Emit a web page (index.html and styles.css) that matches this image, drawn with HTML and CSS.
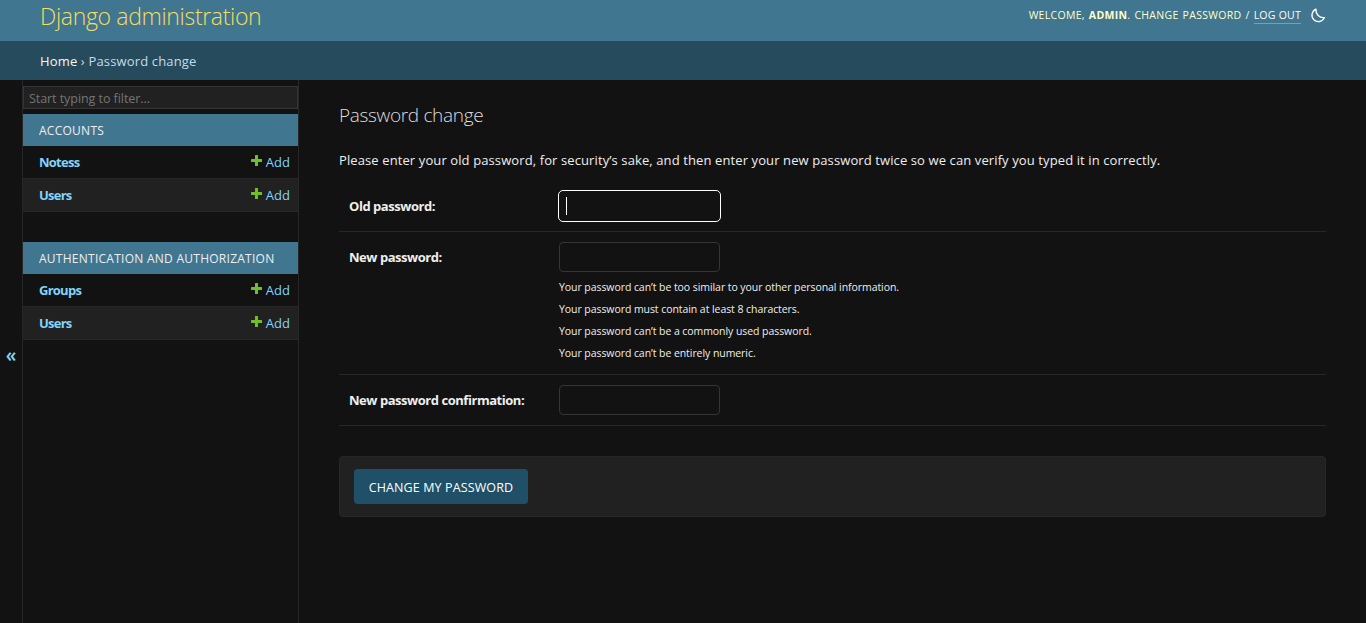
FILE: index.html
```html
<!DOCTYPE html>
<html lang="en">
<head>
<meta charset="utf-8">
<title>Password change | Django site admin</title>
<link rel="stylesheet" href="styles.css">
</head>
<body>
<svg class="sprite" aria-hidden="true">
  <symbol id="plus" viewBox="0 0 11 11"><path d="M4 .5q0-.5.5-.5h2q.5 0 .5.5V4h3.500q.5 0 .5.5v2q0 .5-.5.5H7v3.500q0 .5-.5.5h-2q-.5 0-.5-.5V7H.5q-.5 0-.5-.5v-2q0-.5.5-.5H4z"/></symbol>
</svg>
<header class="header">
  <h1 class="site-name"><span>Django administration</span></h1>
  <div class="user-tools">
    <span class="tools-text">Welcome, <strong>admin</strong>. <span>Change password</span> / </span><a class="logout">Log out</a>
    <svg class="moon" viewBox="0 0 16 16"><path d="M6 2.200A6.450 6.450 0 1 0 14.400 10.600A7.500 7.500 0 0 1 6 2.200Z"/></svg>
  </div>
</header>
<nav class="breadcrumbs"><span><a>Home</a> › Password change</span></nav>
<div class="main">
  <div class="toggle"><span>«</span></div>
  <aside class="sidebar">
    <input class="filter" type="text" placeholder="Start typing to filter...">
    <section class="module">
      <h2 class="caption"><span>Accounts</span></h2>
      <div class="row"><strong>Notess</strong><a class="add"><svg><use href="#plus"/></svg>Add</a></div>
      <div class="row alt"><strong>Users</strong><a class="add"><svg><use href="#plus"/></svg>Add</a></div>
    </section>
    <section class="module">
      <h2 class="caption"><span>Authentication and Authorization</span></h2>
      <div class="row"><strong>Groups</strong><a class="add"><svg><use href="#plus"/></svg>Add</a></div>
      <div class="row alt"><strong>Users</strong><a class="add"><svg><use href="#plus"/></svg>Add</a></div>
    </section>
  </aside>
  <main class="content">
    <h1 class="title"><span>Password change</span></h1>
    <p class="intro"><span>Please enter your old password, for security’s sake, and then enter your new password twice so we can verify you typed it in correctly.</span></p>
    <form>
      <div class="form-row">
        <label>Old password:</label>
        <div class="field focused"><i class="caret"></i></div>
      </div>
      <div class="form-row">
        <label>New password:</label>
        <div>
          <div class="field"></div>
          <ul class="help">
            <li><span>Your password can’t be too similar to your other personal information.</span></li>
            <li><span>Your password must contain at least 8 characters.</span></li>
            <li><span>Your password can’t be a commonly used password.</span></li>
            <li><span>Your password can’t be entirely numeric.</span></li>
          </ul>
        </div>
      </div>
      <div class="form-row">
        <label>New password confirmation:</label>
        <div class="field"></div>
      </div>
      <div class="submit-row"><button type="button" class="submit">Change my password</button></div>
    </form>
  </main>
</div>
</body>
</html>
```
FILE: styles.css
```css
* { box-sizing: border-box; }
body {
  margin: 0;
  height: 623px;
  display: flex;
  flex-direction: column;
  overflow: hidden;
  background: #121212;
  color: #eee;
  font: 13px/20px "Open Sans", "Noto Sans", sans-serif;
  white-space: nowrap;
}
h1, h2, p, ul { margin: 0; padding: 0; font-weight: 400; }
.sprite { position: absolute; width: 0; height: 0; }

.header {
  flex: none;
  height: 41px;
  padding: 0 40px;
  display: flex;
  justify-content: space-between;
  background: #417690;
  color: #ffc;
}
.site-name {
  font-size: 23px;
  line-height: 32px;
  font-weight: 300;
  letter-spacing: -0.33px;
  color: #f5dd5d;
}
.user-tools {
  display: flex;
  height: 30px;
  align-items: center;
  font-size: 10.5px;
  letter-spacing: 0.3px;
  text-transform: uppercase;
}
.tools-text { white-space: pre; word-spacing: 1px; }
.logout {
  height: 16px;
  margin-top: 1px;
  line-height: 14px;
  letter-spacing: 0.25px;
  color: #fff;
  border-bottom: 1px solid #7a9fb1;
}
.moon { width: 16px; height: 16px; margin-left: 9px; fill: none; stroke: #fff; stroke-width: 1.3; stroke-linejoin: round; }

.breadcrumbs {
  flex: none;
  height: 39px;
  padding: 10px 40px;
  background: #264b5d;
  color: #c4dce8;
  letter-spacing: 0.15px;
}
.breadcrumbs a { color: #f7f7f7; }

.main { flex: 1; display: flex; }
.toggle {
  width: 23px;
  border-right: 1px solid #272727;
  display: flex;
  justify-content: center;
  padding-top: 265px;
  font-size: 19px;
  font-weight: 600;
  line-height: 20px;
  color: #81d4fa;
}
.sidebar { width: 276px; padding-top: 6px; border-right: 1px solid #272727; }
.filter {
  display: block;
  width: 275px;
  height: 23px;
  margin-bottom: 5px;
  padding: 1px 5px 0;
  border: 1px solid #353535;
  background: #212121;
  font: 12.5px "Open Sans", sans-serif;
  letter-spacing: -0.06px;
}
.filter::placeholder { color: #757575; }
.module { margin-bottom: 30px; }
.caption {
  height: 32px;
  padding: 0 16px;
  background: #417690;
  font-size: 12px;
  line-height: 33px;
  letter-spacing: 0.26px;
  text-transform: uppercase;
}
.row {
  height: 33px;
  padding: 0 8px 0 16px;
  display: flex;
  justify-content: space-between;
  border-bottom: 1px solid #272727;
  line-height: 32px;
  color: #81d4fa;
}
.row strong { font-weight: 700; letter-spacing: -0.75px; }
.alt { background: #212121; }
.add { display: flex; }
.add svg { width: 11px; height: 11px; margin: 9px 4px 0 0; fill: #70bf2b; }

.content { flex: 1; padding: 22px 40px 0; }
.title { font-size: 19px; line-height: 26px; font-weight: 300; letter-spacing: -0.33px; color: #ddd; }
.intro { margin: 22px 0 0; letter-spacing: 0.106px; }
.form-row {
  display: grid;
  grid-template-columns: 210px 1fr;
  padding: 10px;
  border-bottom: 1px solid #272727;
}
.intro + form { padding-top: 11px; }
.form-row label { padding-top: 5px; font-weight: 700; letter-spacing: -0.46px; }
.field {
  width: 161px;
  height: 30px;
  border: 1px solid #353535;
  border-radius: 4px;
}
.focused { position: relative; border-color: #121212; outline: 1px solid #fff; }
.caret { position: absolute; left: 6px; top: 5px; width: 1px; height: 18px; background: #fff; }
.help { margin: 4px 0 0; list-style: none; font-size: 10.5px; line-height: 22px; letter-spacing: -0.065px; }
.submit-row {
  height: 61px;
  margin-top: 30px;
  padding: 12px 14px;
  border: 1px solid #272727;
  border-radius: 4px;
  background: #212121;
}
.submit {
  width: 174px;
  height: 35px;
  padding: 1px 0 0;
  border: 0;
  border-radius: 4px;
  background: #205067;
  color: #fff;
  font: 12.5px "Open Sans", sans-serif;
  letter-spacing: 0.12px;
  text-transform: uppercase;
}
```
